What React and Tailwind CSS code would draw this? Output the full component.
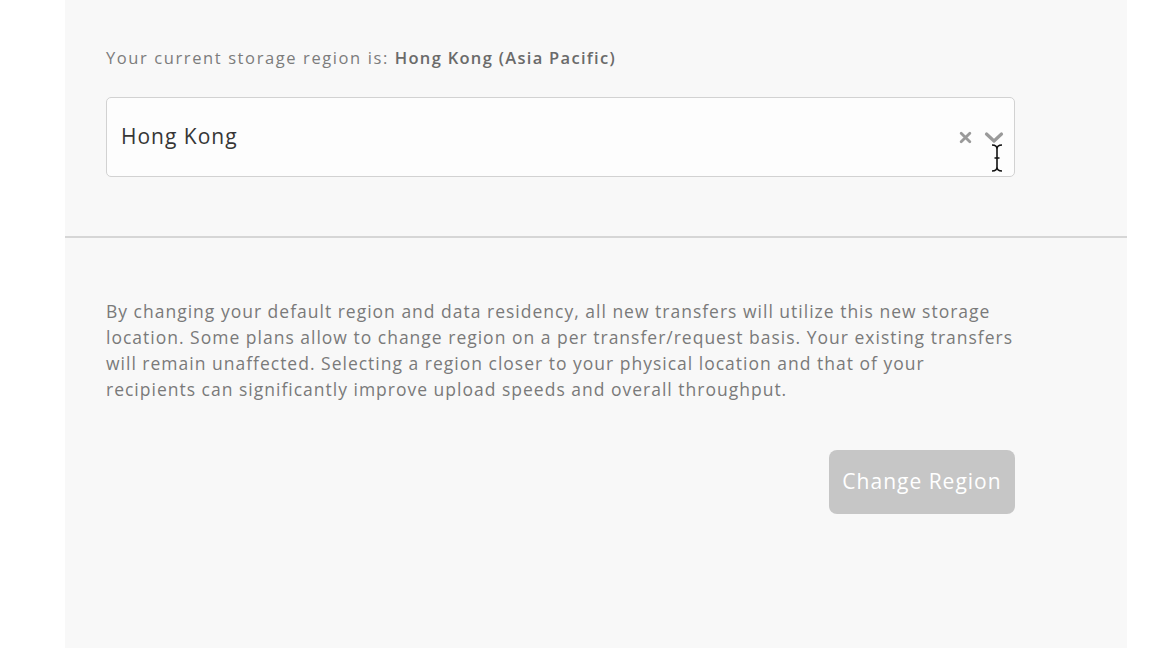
import React from "react";

export default function App() {
  return (
    <div className="w-full h-[648px] bg-white flex overflow-hidden" style={{ fontFamily: "'Open Sans', 'Noto Sans', sans-serif" }}>
      <div className="ml-[65px] w-[1062px] h-full bg-[#f8f8f8] flex flex-col">
        <div className="pl-[41px] pr-[112px] pt-[46px]">
          <p className="text-[16.5px] leading-6 tracking-[1.6px] text-[#7c7c7c] whitespace-nowrap">
            Your current storage region is: <span className="font-semibold text-[#6a6a6a] tracking-[1.3px]">Hong Kong (Asia Pacific)</span>
          </p>
          <div className="relative mt-[27px] h-[80px] rounded-[5px] border border-[#d2d2d2] bg-[#fdfdfd] flex items-center pl-[14px] pr-[10px]">
            <span className="text-[21px] tracking-[1px] text-[#363636]">Hong Kong</span>
            <div className="ml-auto flex items-center gap-[12px]">
              <svg width="13" height="13" viewBox="0 0 12 12" className="text-[#9a9a9a]">
                <path d="M2 2 L10 10 M10 2 L2 10" stroke="currentColor" strokeWidth="2.6" strokeLinecap="round" />
              </svg>
              <svg width="20" height="13" viewBox="0 0 20 13" className="text-[#9a9a9a]">
                <path d="M2.5 3 L10 10 L17.5 3" fill="none" stroke="currentColor" strokeWidth="3.2" strokeLinecap="round" strokeLinejoin="round" />
              </svg>
            </div>
            <svg width="14" height="30" viewBox="0 0 14 30" className="absolute left-[883px] top-[45px]">
              <path d="M2 2 Q7 2 7 6 L7 24 Q7 28 2 28 M12 2 Q7 2 7 6 M7 24 Q7 28 12 28 M4.5 15 L9.5 15" fill="none" stroke="#111" strokeWidth="1.6" />
            </svg>
          </div>
        </div>
        <div className="mt-[59px] h-[2px] bg-[#d6d6d6]" />
        <div className="pl-[41px] pr-[112px] pt-[60px]">
          <p className="text-[17.5px] leading-[26px] tracking-[1px] text-[#7a7a7a]">
            By changing your default region and data residency, all new transfers will utilize this new storage location. Some plans allow to change region on a per transfer/request basis. Your existing transfers will remain unaffected. Selecting a region closer to your physical location and that of your recipients can significantly improve upload speeds and overall throughput.
          </p>
          <div className="mt-[48px] flex justify-end">
            <button className="h-[64px] w-[186px] rounded-[8px] bg-[#c6c6c6] text-[21px] font-medium tracking-[1px] text-white">
              Change Region
            </button>
          </div>
        </div>
      </div>
    </div>
  );
}
